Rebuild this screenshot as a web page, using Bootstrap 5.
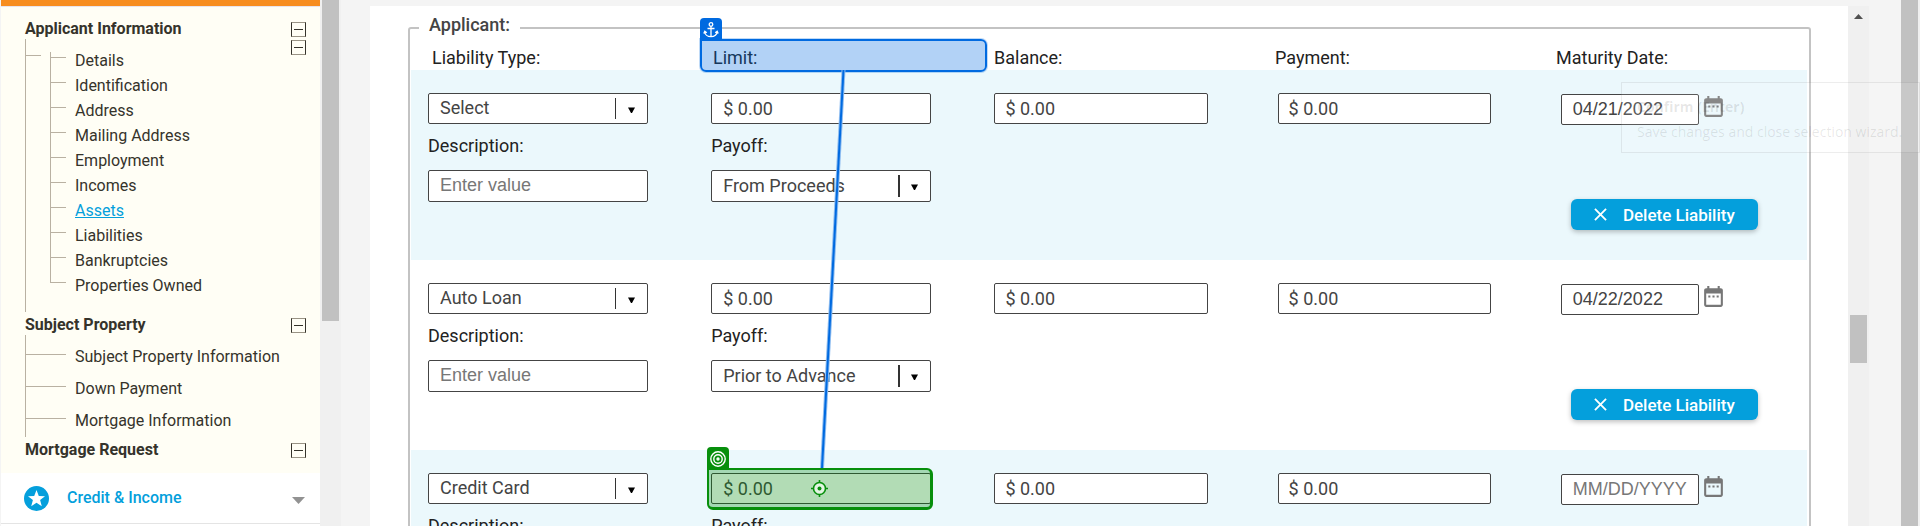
<!DOCTYPE html>
<html lang="en">
<head>
<meta charset="utf-8">
<meta name="viewport" content="width=device-width, initial-scale=1">
<title>Liabilities</title>
<link href="https://cdn.jsdelivr.net/npm/bootstrap@5.3.0/dist/css/bootstrap.min.css" rel="stylesheet">
<style>
  :root { --tree: #b9b1a2; --brand: #049fdc; --anchor: #006ae0; --target: #078f0c; }
  body { font-family: Roboto, "Liberation Sans", sans-serif; background: #f4f4f4; color: #222; font-size: 18px; line-height: 24px; }

  /* Sidebar */
  .side { width: 320px; padding-left: 1px; background: #f4f4f4; font-size: 16px; }
  .side-top { height: 7px; background: #f78d1f; border-bottom: 1px solid #e8e4ec; }
  .side-tree { background: #fffef5; padding: 9px 14px 13px 24px; color: #35332b; }
  .side-head { font-size: 16px; font-weight: 700; line-height: 18px; padding-top: 4px; margin: 0 0 1px; }
  .side a { color: inherit; text-decoration: none; }
  .side a.current { color: var(--brand); text-decoration: underline; }
  .minus { width: 15px; height: 15px; padding: 0; border: 1px solid #35332b; border-top-color: #999385; border-bottom-color: #999385; background: linear-gradient(#35332b, #35332b) center / 9px 1px no-repeat transparent; }
  .branches { border-left: 1px solid var(--tree); }
  .stub { width: 15px; height: 1px; margin: 16px 9px 0 0; background: var(--tree); }
  .sub-toggle { margin-top: 1px; }
  .leafs { padding: 9px 0 14px; line-height: 25px; }
  .leafs li { padding-left: 25px; background: linear-gradient(var(--tree), var(--tree)) 0 9px / 16px 1px no-repeat, linear-gradient(var(--tree), var(--tree)) 0 0 / 1px 100% no-repeat; }
  .leafs li:first-child { background-position: 0 9px, 0 4px; }
  .leafs li:last-child { background-size: 16px 1px, 1px 10px; }
  .wide-leafs { padding: 6px 0 0; line-height: 32px; }
  .wide-leafs li { padding-left: 49px; background: linear-gradient(var(--tree), var(--tree)) 0 13px / 40px 1px no-repeat; }
  .side-link { height: 51px; padding: 0 15px 0 23px; background: #fff; color: var(--brand); font-weight: 500; border: 0; border-bottom: 1px solid #e4e4e4; }
  .side-link-text { padding-left: 18px; }
  .side-rest { background: #fff; }

  /* Scroll rails */
  .rail { width: 21px; background: #f0f0f0; padding: 0 2px; }
  .thumb { background: #c1c1c1; }
  .rail-side .thumb { height: 61vh; }
  .rail-panel .thumb { height: 48px; margin-top: 296px; }
  .rail-page { width: 19px; margin-left: 32px; background: #f0f0f0; padding-right: 2px; }

  /* Form */
  .workspace { padding: 6px 0 0 29px; }
  .panel { padding: 7px 37px 0 38px; background: #fff; }
  fieldset.applicant { border: 2px solid #c3c3c3; border-radius: 3px; padding: 0 2px 0 1px; }
  .applicant legend { font-size: 18px; line-height: 20px; font-weight: 500; color: #444; padding: 2px 10px 8px; margin: 0 0 0 8px; }
  .heads, .entry { display: grid; }
  .heads { grid-template-columns: repeat(4, 281fr) 251fr; padding: 3px 0 0 21px; }
  .entry { grid-template-columns: repeat(4, 283fr) 246fr; padding: 23px 0 30px 17px; }
  .entry:nth-of-type(even) { background: #ebf8fc; }
  .cell-wide { padding-right: 63px; }
  .cell-narrow { padding-right: 70px; }
  .field { display: block; width: 100%; height: 31px; padding: 0 11px 1px; border: 1px solid #444; border-radius: 2px; background-color: #fff; color: #444; font-size: 18px; }
  .cell-narrow .field { padding-left: 10px; }
  select.field { appearance: none; background-repeat: no-repeat;
    background-image: linear-gradient(#333, #333), url("data:image/svg+xml,%3Csvg xmlns='http://www.w3.org/2000/svg' viewBox='0 0 7 6'%3E%3Cpath d='M0 .5h7L4 6H3z'/%3E%3C/svg%3E");
    background-position: right 31px center, right 12px top 13px; background-size: 1px 21px, 7px 6px; }
  .payoff.field { background-size: 2px 22px, 7px 6px; background-position: right 30px center, right 12px top 13px; }
  .field.second { height: 32px; margin-top: 12px; }
  .arial { font-family: "Liberation Sans", sans-serif; }
  .field::placeholder { color: #777; opacity: 1; }
  .field-label { display: block; margin-top: 10px; }
  .date-cell { padding-top: 1px; }
  .date { width: 138px; }
  .calendar { margin-left: 2px; height: 25px; color: #777; }
  .delete { width: 187px; height: 31px; margin: 74px 0 0 10px; padding: 0; border: 0; border-radius: 6px; background: var(--brand); color: #fff; font-size: 17px; font-weight: 500; box-shadow: 0 2px 5px rgba(0,0,0,.25); }

  /* Selection overlays */
  .pick { position: absolute; z-index: 3; pointer-events: none; border: 2px solid; border-radius: 6px; border-top-left-radius: 0; }
  .pick-anchor { inset: -7px 7px -2px -13px; border-color: var(--anchor); background: rgba(0,106,224,.3); box-shadow: 0 0 0 1px rgba(0,106,224,.25); }
  .pick-target { inset: -5px 61px -6px -4px; border-width: 2px 3px 3px 2px; border-color: var(--target); background: rgba(0,140,10,.3); }
  .tag { position: absolute; left: -2px; bottom: 100%; width: 22px; height: 23px; border-radius: 4px 4px 0 0; }
  .pick-anchor .tag { background: var(--anchor); }
  .pick-target .tag { background: var(--target); }
  .link-line { position: absolute; left: 50%; top: 100%; margin-left: -24px; }
  .tip { position: absolute; z-index: 4; top: 82px; right: 0; width: 299px; height: 71px; padding: 11px 15px; border: 1px solid rgba(0,0,0,.07); background: rgba(255,255,255,.12); color: rgba(0,0,0,.1); font-family: "Open Sans", "Noto Sans", sans-serif; font-size: 14px; line-height: 25px; white-space: nowrap; pointer-events: none; }
</style>
</head>
<body>
<svg class="d-none" xmlns="http://www.w3.org/2000/svg">
  <symbol id="cal" viewBox="0 0 24 24"><path fill="currentColor" d="M9 11H7v2h2v-2zm4 0h-2v2h2v-2zm4 0h-2v2h2v-2zm2-7h-1V2h-2v2H8V2H6v2H5c-1.110 0-1.990.9-1.990 2L3 20c0 1.100.89 2 2 2h14c1.100 0 2-.9 2-2V6c0-1.100-.9-2-2-2zm0 16H5V9h14v11z"/></symbol>
  <symbol id="cross" viewBox="0 0 14 14"><path d="M1 1l12 12M13 1L1 13" stroke="currentColor" stroke-width="2" fill="none"/></symbol>
</svg>

<div class="d-flex vh-100 overflow-hidden position-relative">
  <nav class="side d-flex flex-column flex-shrink-0" aria-label="Application sections">
    <div class="side-top"></div>
    <div class="side-tree">
      <h2 class="side-head d-flex justify-content-between align-items-center">Applicant Information <button class="minus" type="button" aria-label="Collapse Applicant Information"></button></h2>
      <div class="branches d-flex align-items-start">
        <span class="stub"></span>
        <ul class="leafs list-unstyled flex-grow-1 mb-0">
          <li><a href="#">Details</a></li>
          <li><a href="#">Identification</a></li>
          <li><a href="#">Address</a></li>
          <li><a href="#">Mailing Address</a></li>
          <li><a href="#">Employment</a></li>
          <li><a href="#">Incomes</a></li>
          <li><a href="#" class="current">Assets</a></li>
          <li><a href="#">Liabilities</a></li>
          <li><a href="#">Bankruptcies</a></li>
          <li><a href="#">Properties Owned</a></li>
        </ul>
        <button class="minus sub-toggle" type="button" aria-label="Collapse applicant"></button>
      </div>
      <h2 class="side-head d-flex justify-content-between align-items-center">Subject Property <button class="minus" type="button" aria-label="Collapse Subject Property"></button></h2>
      <ul class="branches wide-leafs list-unstyled mb-0">
        <li><a href="#">Subject Property Information</a></li>
        <li><a href="#">Down Payment</a></li>
        <li><a href="#">Mortgage Information</a></li>
      </ul>
      <h2 class="side-head d-flex justify-content-between align-items-center">Mortgage Request <button class="minus" type="button" aria-label="Collapse Mortgage Request"></button></h2>
    </div>
    <button class="side-link d-flex align-items-center text-start flex-shrink-0" type="button">
      <svg width="25" height="25" viewBox="0 0 25 25" aria-hidden="true"><circle cx="12.500" cy="12.500" r="12.500" fill="#049fdc"/><path fill="#fff" d="M12.500 4l2.300 5.900 6.200.3-4.900 3.900 1.700 6.100-5.300-3.500-5.300 3.500 1.700-6.100L4 10.200l6.200-.3z"/></svg>
      <span class="side-link-text flex-grow-1">Credit &amp; Income</span>
      <svg width="13" height="7" viewBox="0 0 13 7" class="mt-1" aria-hidden="true"><path fill="#929292" d="M0 0h13L6.500 7z"/></svg>
    </button>
    <div class="side-rest flex-grow-1"></div>
  </nav>
  <div class="rail rail-side flex-shrink-0"><div class="thumb"></div></div>

  <main class="workspace flex-grow-1 d-flex">
    <div class="d-flex flex-grow-1">
      <form class="panel flex-grow-1">
        <fieldset class="applicant">
          <legend class="float-none w-auto">Applicant:</legend>
          <div class="heads">
            <span>Liability Type:</span>
            <span class="position-relative">Limit:
              <span class="pick pick-anchor">
                <span class="tag d-flex align-items-center justify-content-center">
                  <svg width="16" height="16" viewBox="0 0 16 16" fill="none" stroke="#fff" stroke-width="1.300" aria-hidden="true"><circle cx="8" cy="2.500" r="1.800"/><path d="M8 4.300V15M4.500 6.500h7M1.800 9.500c0 3.300 2.800 5.200 6.200 5.200s6.200-1.900 6.200-5.200M.8 11.500l1-2.300 2 1.500M15.200 11.500l-1-2.300-2 1.500"/></svg>
                </span>
                <svg class="link-line" width="26" height="398" viewBox="0 0 26 398" aria-hidden="true"><path d="M23.500 0L2 398" stroke="#8dbcf0" stroke-width="4"/><path d="M23.500 0L2 398" stroke="#006ae0" stroke-width="2"/></svg>
              </span>
            </span>
            <span>Balance:</span>
            <span>Payment:</span>
            <span>Maturity Date:</span>
          </div>

          <div class="entry">
            <div class="cell-wide">
              <select class="field" aria-label="Liability Type"><option>Select</option></select>
              <label class="field-label" for="desc1">Description:</label>
              <input class="field second arial" id="desc1" type="text" placeholder="Enter value">
            </div>
            <div class="cell-wide">
              <input class="field" type="text" aria-label="Limit" value="$ 0.00">
              <label class="field-label" for="pay1">Payoff:</label>
              <select class="field second payoff" id="pay1"><option>From Proceeds</option></select>
            </div>
            <div class="cell-narrow"><input class="field" type="text" aria-label="Balance" value="$ 0.00"></div>
            <div class="cell-narrow"><input class="field" type="text" aria-label="Payment" value="$ 0.00"></div>
            <div class="date-cell">
              <div class="d-flex align-items-start"><input class="field date arial" type="text" aria-label="Maturity Date" value="04/21/2022"><button class="calendar btn p-0 border-0 d-flex" type="button" aria-label="Open calendar"><svg width="25" height="25"><use href="#cal"/></svg></button></div>
              <button class="delete d-flex align-items-center justify-content-center gap-3" type="button"><svg width="13" height="13" aria-hidden="true"><use href="#cross"/></svg>Delete Liability</button>
            </div>
          </div>

          <div class="entry">
            <div class="cell-wide">
              <select class="field" aria-label="Liability Type"><option>Auto Loan</option></select>
              <label class="field-label" for="desc2">Description:</label>
              <input class="field second arial" id="desc2" type="text" placeholder="Enter value">
            </div>
            <div class="cell-wide">
              <input class="field" type="text" aria-label="Limit" value="$ 0.00">
              <label class="field-label" for="pay2">Payoff:</label>
              <select class="field second payoff" id="pay2"><option>Prior to Advance</option></select>
            </div>
            <div class="cell-narrow"><input class="field" type="text" aria-label="Balance" value="$ 0.00"></div>
            <div class="cell-narrow"><input class="field" type="text" aria-label="Payment" value="$ 0.00"></div>
            <div class="date-cell">
              <div class="d-flex align-items-start"><input class="field date arial" type="text" aria-label="Maturity Date" value="04/22/2022"><button class="calendar btn p-0 border-0 d-flex" type="button" aria-label="Open calendar"><svg width="25" height="25"><use href="#cal"/></svg></button></div>
              <button class="delete d-flex align-items-center justify-content-center gap-3" type="button"><svg width="13" height="13" aria-hidden="true"><use href="#cross"/></svg>Delete Liability</button>
            </div>
          </div>

          <div class="entry">
            <div class="cell-wide">
              <select class="field" aria-label="Liability Type"><option>Credit Card</option></select>
              <label class="field-label" for="desc3">Description:</label>
              <input class="field second arial" id="desc3" type="text" placeholder="Enter value">
            </div>
            <div>
              <div class="position-relative cell-wide">
                <input class="field" type="text" aria-label="Limit" value="$ 0.00">
                <span class="pick pick-target d-flex align-items-center justify-content-center">
                  <span class="tag d-flex align-items-center justify-content-center">
                    <svg width="16" height="16" viewBox="0 0 16 16" fill="none" stroke="#fff" stroke-width="1.400" aria-hidden="true"><circle cx="8" cy="8" r="7.200"/><circle cx="8" cy="8" r="4.200"/><circle cx="8" cy="8" r="1"/></svg>
                  </span>
                  <svg width="17" height="17" viewBox="0 0 17 17" fill="none" stroke="#078f0c" stroke-width="1.600" aria-hidden="true"><circle cx="8.500" cy="8.500" r="6" fill="#e3f4e3"/><path d="M8.500 0v3M8.500 14v3M0 8.500h3M14 8.500h3"/><circle cx="8.500" cy="8.500" r="2" fill="#078f0c" stroke="none"/></svg>
                </span>
              </div>
              <div class="cell-wide">
                <label class="field-label" for="pay3">Payoff:</label>
                <select class="field second payoff" id="pay3"><option>Select</option></select>
              </div>
            </div>
            <div class="cell-narrow"><input class="field" type="text" aria-label="Balance" value="$ 0.00"></div>
            <div class="cell-narrow"><input class="field" type="text" aria-label="Payment" value="$ 0.00"></div>
            <div class="date-cell">
              <div class="d-flex align-items-start"><input class="field date arial" type="text" aria-label="Maturity Date" placeholder="MM/DD/YYYY"><button class="calendar btn p-0 border-0 d-flex" type="button" aria-label="Open calendar"><svg width="25" height="25"><use href="#cal"/></svg></button></div>
              <button class="delete d-flex align-items-center justify-content-center gap-3" type="button"><svg width="13" height="13" aria-hidden="true"><use href="#cross"/></svg>Delete Liability</button>
            </div>
          </div>
        </fieldset>
      </form>
      <div class="rail rail-panel flex-shrink-0">
        <svg class="d-block mx-auto mt-2" width="9" height="5" viewBox="0 0 9 5" aria-hidden="true"><path fill="#505050" d="M4.500 0L9 5H0z"/></svg>
        <div class="thumb"></div>
      </div>
    </div>
  </main>
  <div class="rail-page flex-shrink-0"><div class="thumb h-100"></div></div>

  <div class="tip" role="tooltip"><strong class="d-block">Confirm (Enter)</strong>Save changes and close selection wizard.</div>
</div>
<script src="https://cdn.jsdelivr.net/npm/bootstrap@5.3.0/dist/js/bootstrap.bundle.min.js"></script>
</body>
</html>
